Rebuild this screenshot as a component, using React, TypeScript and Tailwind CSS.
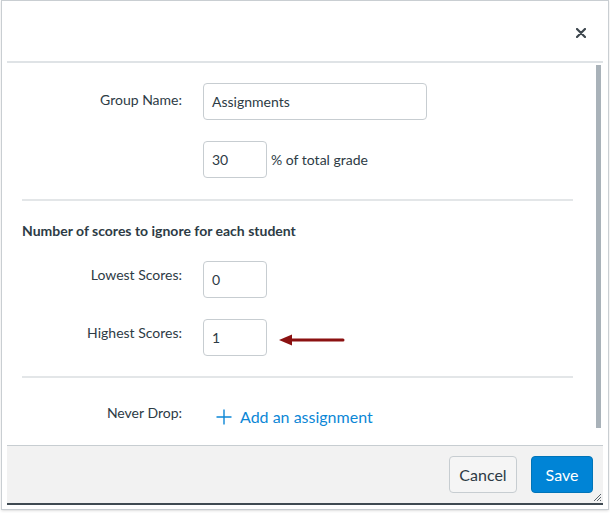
import React from 'react';

const font = { fontFamily: 'Lato, "Open Sans", sans-serif' };

function Field({ value, width }: { value: string; width: string }) {
  return (
    <div
      className={`${width} h-[37px] border border-[#c7cdd1] rounded-[4px] bg-white px-[8px] flex items-center text-[14px] text-[#2d3b45]`}
    >
      {value}
    </div>
  );
}

function Row({ label, top, children }: { label: string; top: string; children: React.ReactNode }) {
  return (
    <div className="flex items-start">
      <div className={`w-[160px] ${top} text-right text-[14px] leading-5 text-[#2d3b45]`}>{label}</div>
      <div className="ml-[21px] flex items-center">{children}</div>
    </div>
  );
}

export default function App() {
  return (
    <div className="w-[610px] h-[513px] bg-white" style={font}>
      <div className="ml-px w-[608px] h-[510px] border border-[#c9ced2] pl-[5px] pr-[5px] flex flex-col shadow-sm">
        <div className="h-[62px] shrink-0 border-b-2 border-[#dfe3e6] flex items-center justify-end pr-[17px]">
          <svg width="10" height="10" viewBox="0 0 10 10" className="mt-[4px]">
            <path d="M1 1 L9 9 M9 1 L1 9" stroke="#3d464d" strokeWidth="2.2" strokeLinecap="round" />
          </svg>
        </div>

        <div className="flex-1 flex min-h-0">
          <div className="flex-1 pl-[15px] pr-[23px] pt-[20px]">
            <Row label="Group Name:" top="pt-[7px]">
              <Field value="Assignments" width="w-[224px]" />
            </Row>
            <div className="mt-[21px] ml-[181px] flex items-center">
              <Field value="30" width="w-[64px]" />
              <span className="ml-[4px] text-[14px] text-[#2d3b45]">% of total grade</span>
            </div>
            <div className="mt-[21px] border-t-2 border-[#e3e6e8]" />
            <div className="mt-[20px] text-[14px] leading-5 font-bold text-[#2d3b45]">
              Number of scores to ignore for each student
            </div>
            <div className="mt-[20px]">
              <Row label="Lowest Scores:" top="pt-[4px]">
                <Field value="0" width="w-[64px]" />
              </Row>
            </div>
            <div className="mt-[21px]">
              <Row label="Highest Scores:" top="pt-[4px]">
                <Field value="1" width="w-[64px]" />
                <svg width="66" height="12" viewBox="0 0 66 12" className="ml-[12px] mt-[4px]">
                  <path d="M10 6 L64 6" stroke="#8b1111" strokeWidth="3" strokeLinecap="round" />
                  <path d="M0 6 L13 0.5 L13 11.5 Z" fill="#8b1111" />
                </svg>
              </Row>
            </div>
            <div className="mt-[20px] border-t-2 border-[#e3e6e8]" />
            <div className="mt-[25px] flex items-start">
              <div className="w-[160px] text-right text-[14px] leading-5 text-[#2d3b45]">Never Drop:</div>
              <div className="ml-[34px] flex items-center text-[#0c87d6] mt-[2px]">
                <svg width="16" height="16" viewBox="0 0 16 16">
                  <path d="M8 0.5 V15.5 M0.5 8 H15.5" stroke="#0c87d6" strokeWidth="1.4" />
                </svg>
                <span className="ml-[8px] text-[16px]">Add an assignment</span>
              </div>
            </div>
          </div>
          <div className="w-[5px] mr-[2px] pt-[2px] pb-[16px] flex flex-col">
            <div className="flex-1 bg-[#a9b2b9]" />
          </div>
        </div>

        <div className="h-[60px] shrink-0 mt-[1px] bg-[#f2f2f2] border-t border-[#c7cdd1] border-b-2 border-b-[#3f4a52] flex items-center justify-end pr-[10px] gap-[14px] relative mb-[4px]">
          <button className="h-[37px] w-[68px] rounded-[4px] border border-[#c7cdd1] bg-[#f5f5f5] text-[16px] text-[#2d3b45]">
            Cancel
          </button>
          <button className="h-[37px] w-[62px] rounded-[4px] border border-[#0074b8] bg-[#0084d6] text-[16px] text-white">
            Save
          </button>
          <svg width="9" height="9" viewBox="0 0 9 9" className="absolute right-[1px] bottom-[1px]">
            <path d="M8 1 L1 8 M8 4 L4 8 M8 7 L7 8" stroke="#5b646b" strokeWidth="1" />
          </svg>
        </div>
      </div>
    </div>
  );
}
